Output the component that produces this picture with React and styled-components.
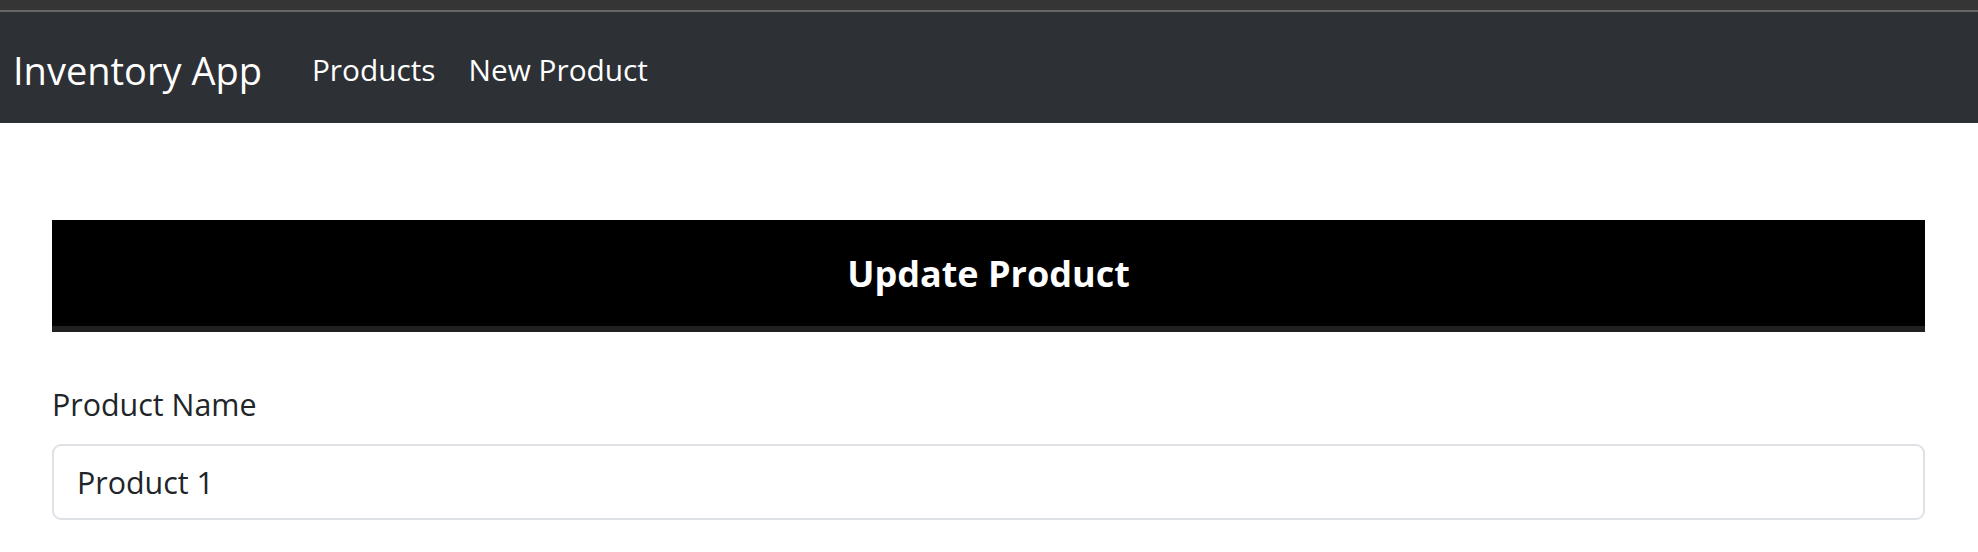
import styled, { createGlobalStyle } from 'styled-components'

const GlobalStyle = createGlobalStyle`
  body {
    margin: 0;
    background: #fff;
    font-family: "Open Sans", "Noto Sans", sans-serif;
    color: #212529;
  }
`

const TopStrip = styled.div`
  height: 10px;
  background-color: #353535;
  border-bottom: 2px solid #676767;
`

const NavBar = styled.nav`
  box-sizing: border-box;
  height: 111px;
  background-color: #2d3035;
  display: flex;
  align-items: center;
  padding: 3px 0 0 13px;
`

const Brand = styled.a`
  font-size: 38px;
  color: #fff;
  text-decoration: none;
  margin-right: 50px;
  margin-top: 2px;
`

const NavLinks = styled.div`
  display: flex;
  align-items: center;
  gap: 33px;
`

const NavLink = styled.a`
  font-size: 29.8px;
  color: #fff;
  text-decoration: none;
`

const Container = styled.main`
  padding: 97px 53px 0 52px;
`

const Header = styled.div`
  height: 106px;
  background-color: #000;
  border-bottom: 6px solid #202020;
  display: flex;
  align-items: center;
  justify-content: center;
`

const Title = styled.h2`
  margin: 0;
  color: #fff;
  font-size: 36px;
  font-weight: 700;
`

const Field = styled.div`
  margin-top: 50px;
`

const Label = styled.label`
  display: block;
  font-size: 30.4px;
  line-height: 1.5;
  margin-bottom: 16px;
`

const Input = styled.input`
  display: block;
  box-sizing: border-box;
  width: 100%;
  height: 76px;
  padding: 2px 23px 0;
  font-family: "Open Sans", "Noto Sans", sans-serif;
  font-size: 30.4px;
  color: #212529;
  border: 2px solid #dee2e6;
  border-radius: 9px;
  outline: none;
  background: #fff;
`

function App() {
  return (
    <>
      <GlobalStyle />
      <TopStrip />
      <NavBar>
        <Brand href="#">Inventory App</Brand>
        <NavLinks>
          <NavLink href="#">Products</NavLink>
          <NavLink href="#">New Product</NavLink>
        </NavLinks>
      </NavBar>
      <Container>
        <Header>
          <Title>Update Product</Title>
        </Header>
        <Field>
          <Label htmlFor="name">Product Name</Label>
          <Input id="name" defaultValue="Product 1" />
        </Field>
      </Container>
    </>
  )
}

export default App
